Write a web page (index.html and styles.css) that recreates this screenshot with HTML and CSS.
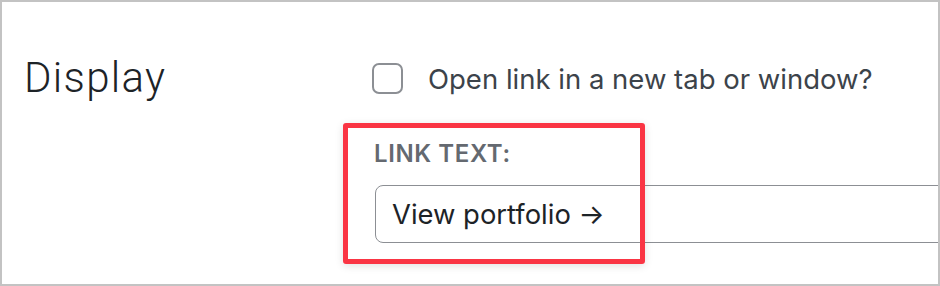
FILE: index.html
```html
<!DOCTYPE html>
<html lang="en">
<head>
<meta charset="utf-8">
<title>Display settings</title>
<link rel="stylesheet" href="styles.css">
</head>
<body>
<div class="frame">
  <div class="row">
    <h2 class="heading">Display</h2>
    <div class="fields">
      <label class="check">
        <span class="box"></span>
        <span class="check-text">Open link in a new tab or window?</span>
      </label>
      <div class="link-field">
        <div class="field-label">LINK TEXT:</div>
        <div class="input">View portfolio →</div>
      </div>
    </div>
  </div>
  <div class="highlight"></div>
</div>
</body>
</html>
```

FILE: styles.css
```css
* { box-sizing: border-box; }
html, body { margin: 0; padding: 0; background: #fff; }
body { font-family: Inter, "Noto Sans", sans-serif; }

.frame {
  position: relative;
  width: 940px;
  height: 286px;
  border: 2px solid #c3c3c3;
  overflow: hidden;
  background: #fff;
  padding: 59px 0 0 22px;
}

.row {
  display: grid;
  grid-template-columns: 348px 1fr;
  align-items: start;
}

.heading {
  margin: -7px 0 0;
  font-family: Roboto, Inter, sans-serif;
  font-weight: 300;
  font-size: 42px;
  line-height: 48px;
  color: #1d2327;
  letter-spacing: 1.3px;
}

.fields {
  display: flex;
  flex-direction: column;
}

.check {
  display: flex;
  align-items: center;
  gap: 25px;
  height: 35px;
}

.box {
  flex: none;
  width: 31px;
  height: 31px;
  border: 2px solid #8c8f94;
  border-radius: 7px;
  background: #fff;
}

.check-text {
  font-size: 27.5px;
  color: #3c434a;
}

.link-field {
  padding-left: 2px;
  margin-top: 44px;
}

.field-label {
  font-size: 24px;
  font-weight: 600;
  letter-spacing: 0.6px;
  color: #646970;
  line-height: 28px;
}

.input {
  margin-top: 17px;
  margin-left: 1px;
  width: 620px;
  height: 58px;
  border: 1px solid #8c8f94;
  border-radius: 8px;
  display: flex;
  align-items: center;
  padding-left: 16px;
  font-size: 27.4px;
  color: #1d2327;
}

.highlight {
  position: absolute;
  left: 341px;
  top: 121px;
  width: 302px;
  height: 141px;
  border: 5px solid #fa3544;
  border-radius: 3px;
  box-shadow: 0 2px 8px rgba(0, 0, 0, 0.12);
}
```
